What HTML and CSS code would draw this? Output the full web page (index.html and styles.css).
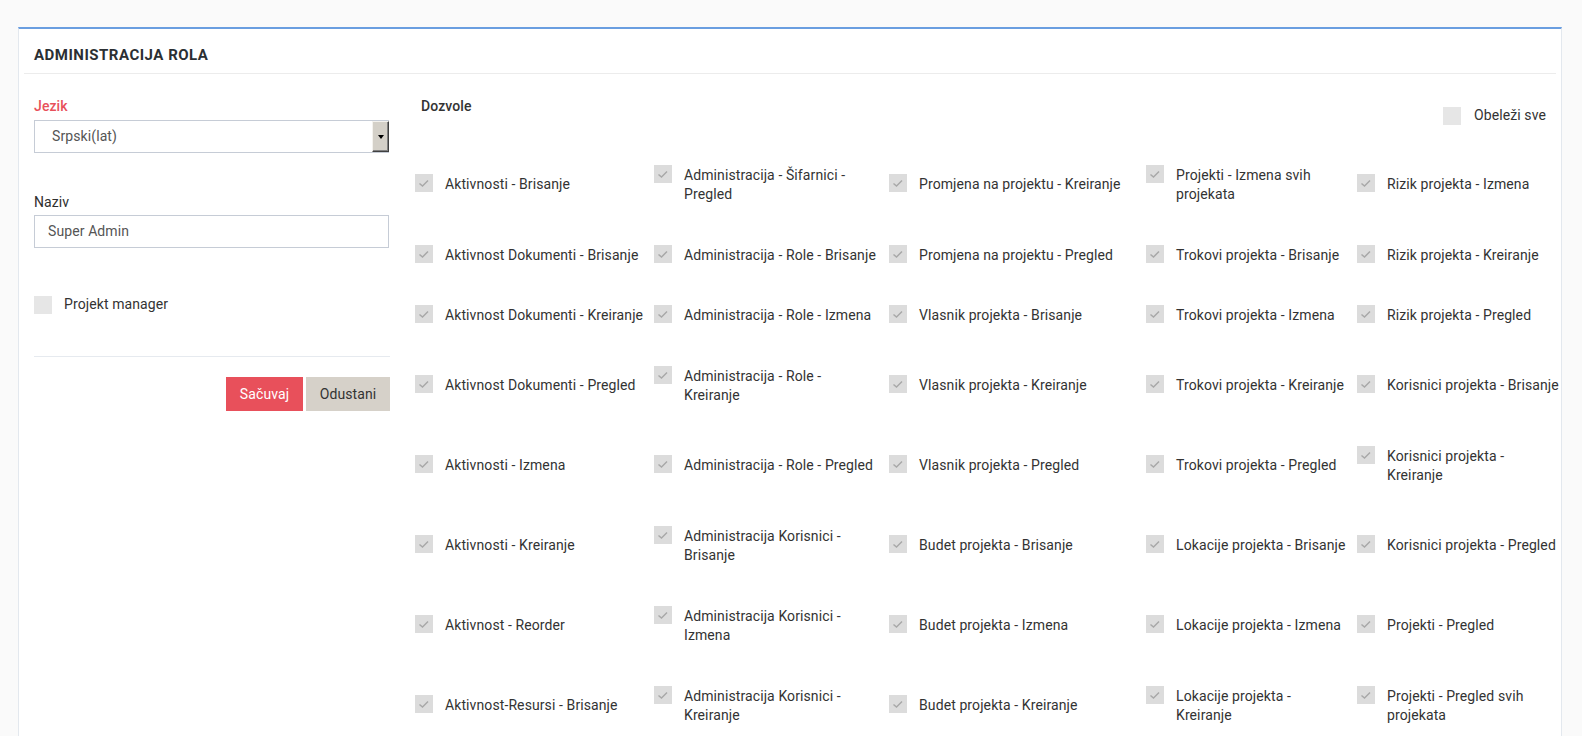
FILE: index.html
```html
<!DOCTYPE html>
<html lang="sr">
<head>
<meta charset="utf-8">
<title>Administracija rola</title>
<link rel="stylesheet" href="styles.css">
</head>
<body>
<div class="panel">
  <div class="panel-head"><h1 class="title">ADMINISTRACIJA ROLA</h1></div>
  <div class="content">
    <div class="left">
      <label class="label label-red">Jezik</label>
      <div class="select">
        <span class="select-text">Srpski(lat)</span>
        <span class="select-btn"><span class="arrow"></span></span>
      </div>
      <label class="label label-gap">Naziv</label>
      <div class="input">Super Admin</div>
      <div class="check-row">
        <span class="cb"></span>
        <span class="check-label">Projekt manager</span>
      </div>
      <div class="divider"></div>
      <div class="buttons">
        <button class="btn btn-save">Sačuvaj</button>
        <button class="btn btn-cancel">Odustani</button>
      </div>
    </div>
    <div class="right">
      <div class="right-head">
        <span class="label dozvole">Dozvole</span>
        <div class="select-all">
          <span class="cb"></span>
          <span class="check-label">Obeleži sve</span>
        </div>
      </div>
      <div class="grid" id="grid"></div>
    </div>
  </div>
</div>
<script src="app.js"></script>
</body>
</html>
```
FILE: app.js
```js
var items = [
  "Aktivnosti - Brisanje", "Administracija - Šifarnici -|Pregled", "Promjena na projektu - Kreiranje", "Projekti - Izmena svih|projekata", "Rizik projekta - Izmena",
  "Aktivnost Dokumenti - Brisanje", "Administracija - Role - Brisanje", "Promjena na projektu - Pregled", "Trokovi projekta - Brisanje", "Rizik projekta - Kreiranje",
  "Aktivnost Dokumenti - Kreiranje", "Administracija - Role - Izmena", "Vlasnik projekta - Brisanje", "Trokovi projekta - Izmena", "Rizik projekta - Pregled",
  "Aktivnost Dokumenti - Pregled", "Administracija - Role -|Kreiranje", "Vlasnik projekta - Kreiranje", "Trokovi projekta - Kreiranje", "Korisnici projekta - Brisanje",
  "Aktivnosti - Izmena", "Administracija - Role - Pregled", "Vlasnik projekta - Pregled", "Trokovi projekta - Pregled", "Korisnici projekta -|Kreiranje",
  "Aktivnosti - Kreiranje", "Administracija Korisnici -|Brisanje", "Budet projekta - Brisanje", "Lokacije projekta - Brisanje", "Korisnici projekta - Pregled",
  "Aktivnost - Reorder", "Administracija Korisnici -|Izmena", "Budet projekta - Izmena", "Lokacije projekta - Izmena", "Projekti - Pregled",
  "Aktivnost-Resursi - Brisanje", "Administracija Korisnici -|Kreiranje", "Budet projekta - Kreiranje", "Lokacije projekta -|Kreiranje", "Projekti - Pregled svih|projekata"
];
var check = '<svg width="18" height="18" viewBox="0 0 18 18"><path d="M4.5 9.5 L7.5 12 L13 6.5" fill="none" stroke="#a8a8a8" stroke-width="1.5"/></svg>';
var grid = document.getElementById('grid');
items.forEach(function (t) {
  var cell = document.createElement('div');
  cell.className = 'cell';
  var cb = document.createElement('span');
  cb.className = 'cb cb-on';
  cb.innerHTML = check;
  var lab = document.createElement('span');
  lab.className = 'cell-label';
  var parts = t.split('|');
  parts.forEach(function (p, i) {
    if (i > 0) lab.appendChild(document.createElement('br'));
    lab.appendChild(document.createTextNode(p));
  });
  cell.appendChild(cb);
  cell.appendChild(lab);
  grid.appendChild(cell);
});
```
FILE: styles.css
```css
* { box-sizing: border-box; }
html, body { margin: 0; }
body {
  background: #fafafa;
  padding: 27px 20px 0 18px;
  font-family: Roboto, "Liberation Sans", sans-serif;
  font-size: 14px;
  letter-spacing: 0.1px;
  color: #333;
  overflow: hidden;
  height: 736px;
}
.panel {
  background: #fff;
  border: 1px solid #e3e8ee;
  border-top: 2px solid #6a9ee0;
  height: 760px;
}
.panel-head {
  margin: 0 5px;
  padding: 16px 10px 8px;
  border-bottom: 1px solid #ececec;
}
.title {
  margin: 0;
  font-size: 15px;
  line-height: 20px;
  font-weight: 700;
  letter-spacing: 0.5px;
  color: #2b2f33;
}
.content {
  display: flex;
  padding: 22px 15px 0 15px;
}
.left {
  width: 356px;
  flex: none;
  display: flex;
  flex-direction: column;
}
.label {
  display: block;
  line-height: 20px;
  font-weight: 500;
  color: #333;
  margin-bottom: 4px;
}
.label-red { color: #e8505b; }
.label-gap { margin-top: 39px; margin-bottom: 3px; font-weight: 400; color: #2e2e2e; }
.select {
  display: flex;
  height: 33px;
  width: 355px;
  border: 1px solid #c6ccd6;
  border-right: none;
}
.select-text {
  flex: 1;
  padding-left: 17px;
  line-height: 31px;
  color: #555;
}
.select-btn {
  width: 17px;
  background: #d4d0c8;
  border-left: 1px solid #f4f2ee;
  border-top: 1px solid #f4f2ee;
  border-right: 1px solid #404040;
  border-bottom: 1px solid #404040;
  box-shadow: inset -1px -1px 0 #808080;
  display: flex;
  align-items: center;
  justify-content: center;
}
.arrow {
  width: 0;
  height: 0;
  border-left: 3.5px solid transparent;
  border-right: 3.5px solid transparent;
  border-top: 4px solid #000;
}
.input {
  height: 33px;
  width: 355px;
  border: 1px solid #c6ccd6;
  padding-left: 13px;
  line-height: 31px;
  color: #555;
}
.check-row {
  display: flex;
  align-items: center;
  margin-top: 47px;
}
.cb {
  width: 18px;
  height: 18px;
  flex: none;
  background: #e6e6e6;
  display: block;
}
.cb svg { display: block; }
.cb-on { background: #dcdcdc; }
.check-label {
  margin-left: 12px;
  line-height: 19.5px;
}
.divider {
  margin-top: 41px;
  height: 1px;
  background: #e6eaef;
}
.buttons {
  display: flex;
  justify-content: flex-end;
  gap: 3px;
  margin-top: 20px;
}
.btn {
  height: 34px;
  border: none;
  font-family: inherit;
  font-size: 14px;
  letter-spacing: 0.1px;
  padding: 0;
}
.btn-save { width: 77px; background: #e8505b; color: #fff; }
.btn-cancel { width: 84px; background: #d6d1c9; color: #333; }
.right {
  flex: 1;
  margin-left: 25px;
  min-width: 0;
}
.right-head {
  display: flex;
  justify-content: space-between;
  align-items: flex-start;
}
.dozvole { margin-left: 6px; margin-bottom: 0; }
.select-all {
  display: flex;
  align-items: center;
  margin-top: 10px;
}
.select-all .check-label { margin-left: 13px; }
.grid {
  display: grid;
  grid-template-columns: 239px 235px 257px 211px 204px;
  align-items: center;
  margin-top: 19.5px;
}
.cell {
  display: flex;
  align-items: flex-start;
  padding: 20.5px 0;
}
.cell .cb { margin-top: -1px; }
.cell-label {
  margin-left: 12px;
  line-height: 19.5px;
  white-space: nowrap;
}
```
